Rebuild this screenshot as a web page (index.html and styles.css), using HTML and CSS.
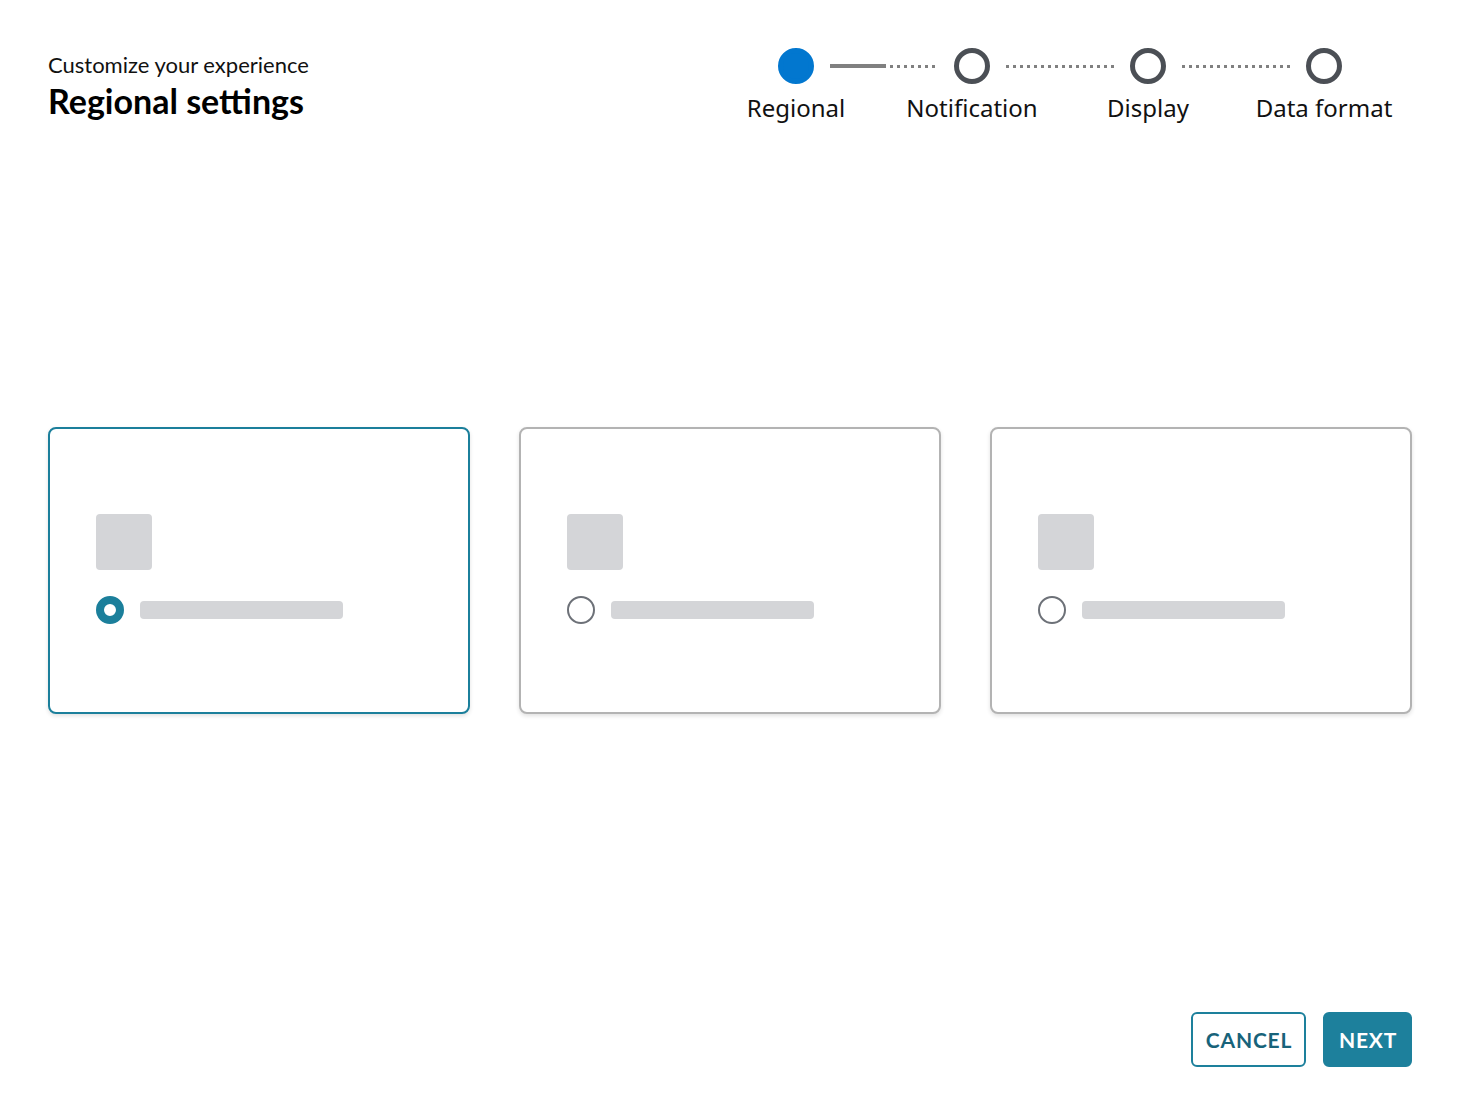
FILE: index.html
```html
<!DOCTYPE html>
<html lang="en">
<head>
<meta charset="utf-8">
<title>Regional settings</title>
<link rel="stylesheet" href="styles.css">
</head>
<body>
<div class="page">
  <header class="header">
    <div class="titles">
      <div class="eyebrow">Customize your experience</div>
      <h1 class="title">Regional settings</h1>
    </div>
    <nav class="stepper">
      <div class="track">
        <span class="dot dot-active"></span>
        <span class="line line-progress"><span class="line-solid"></span><span class="line-dots"></span></span>
        <span class="dot"></span>
        <span class="line"><span class="line-dots"></span></span>
        <span class="dot"></span>
        <span class="line"><span class="line-dots"></span></span>
        <span class="dot"></span>
      </div>
      <div class="labels">
        <span class="label">Regional</span>
        <span class="label">Notification</span>
        <span class="label">Display</span>
        <span class="label">Data format</span>
      </div>
    </nav>
  </header>

  <main class="main">
    <div class="cards">
      <div class="card card-selected">
        <div class="card-body">
          <div class="thumb"></div>
          <div class="option">
            <span class="radio radio-on"></span>
            <span class="bar"></span>
          </div>
        </div>
      </div>
      <div class="card">
        <div class="card-body">
          <div class="thumb"></div>
          <div class="option">
            <span class="radio"></span>
            <span class="bar"></span>
          </div>
        </div>
      </div>
      <div class="card">
        <div class="card-body">
          <div class="thumb"></div>
          <div class="option">
            <span class="radio"></span>
            <span class="bar"></span>
          </div>
        </div>
      </div>
    </div>
  </main>

  <footer class="footer">
    <button class="btn btn-outline">CANCEL</button>
    <button class="btn btn-primary">NEXT</button>
  </footer>
</div>
</body>
</html>
```

FILE: styles.css
```css
* { box-sizing: border-box; }

html, body {
  margin: 0;
  padding: 0;
  background: #ffffff;
}

body {
  font-family: "Lato", "Liberation Sans", sans-serif;
  color: #111111;
}

.page {
  height: 1116px;
  padding: 48px 48px 49px;
  display: flex;
  flex-direction: column;
}

.header {
  height: 80px;
  display: flex;
  justify-content: space-between;
  align-items: flex-start;
}

.titles {
  padding-top: 4px;
}

.eyebrow {
  font-size: 22px;
  line-height: 26px;
  color: #111;
}

.title {
  margin: 3px 0 0;
  font-size: 34px;
  line-height: 40px;
  font-weight: 700;
  color: #000;
}

.stepper {
  width: 704px;
  display: flex;
  flex-direction: column;
}

.track {
  display: flex;
  align-items: center;
  padding-left: 70px;
  height: 36px;
}

.dot {
  width: 36px;
  height: 36px;
  border-radius: 50%;
  border: 5px solid #4b4f55;
  flex: none;
}

.dot-active {
  background: #0277cf;
  border-color: #0277cf;
}

.line {
  width: 108px;
  margin: 0 16px;
  flex: none;
  display: flex;
  align-items: center;
  height: 4px;
}

.line-solid {
  width: 56px;
  height: 4px;
  background: #808080;
  margin-right: 4px;
}

.line-dots {
  flex: 1;
  height: 3px;
  background-image: linear-gradient(to right, #808080 0 3px, transparent 3px 7px);
  background-size: 7px 3px;
  background-repeat: repeat-x;
}

.labels {
  display: grid;
  grid-template-columns: repeat(4, 176px);
  margin-top: 8px;
}

.label {
  text-align: center;
  font-family: "Noto Sans", "Open Sans", sans-serif;
  font-size: 24px;
  line-height: 32px;
  color: #111;
}

.main {
  flex: 1;
  display: flex;
  align-items: center;
}

.cards {
  width: 100%;
  display: grid;
  grid-template-columns: repeat(3, 1fr);
  gap: 49px;
}

.card {
  height: 287px;
  border: 2px solid #b3b3b3;
  border-radius: 8px;
  background: #fff;
  box-shadow: 0 2px 4px rgba(0, 0, 0, 0.12);
  display: flex;
  align-items: center;
  padding-left: 46px;
}

.card-selected {
  border-color: #1b7f9b;
}

.card-body {
  display: flex;
  flex-direction: column;
  gap: 26px;
  margin-top: -2px;
}

.thumb {
  width: 56px;
  height: 56px;
  border-radius: 4px;
  background: #d4d5d8;
}

.option {
  display: flex;
  align-items: center;
  gap: 16px;
}

.radio {
  width: 28px;
  height: 28px;
  border-radius: 50%;
  border: 2px solid #6d7178;
  flex: none;
}

.radio-on {
  border: 8px solid #1b7f9b;
}

.bar {
  width: 203px;
  height: 18px;
  border-radius: 4px;
  background: #d4d5d8;
}

.footer {
  display: flex;
  justify-content: flex-end;
  gap: 17px;
}

.btn {
  height: 55px;
  border-radius: 6px;
  font-family: "Lato", "Liberation Sans", sans-serif;
  font-weight: 700;
  font-size: 21px;
  letter-spacing: 0.8px;
  padding: 0 0 0 1px;
  text-align: center;
  cursor: pointer;
}

.btn-outline {
  width: 115px;
  background: #fff;
  border: 2px solid #1d809c;
  color: #17637a;
}

.btn-primary {
  width: 89px;
  background: #1d809c;
  border: 2px solid #1d809c;
  color: #fff;
}
```
